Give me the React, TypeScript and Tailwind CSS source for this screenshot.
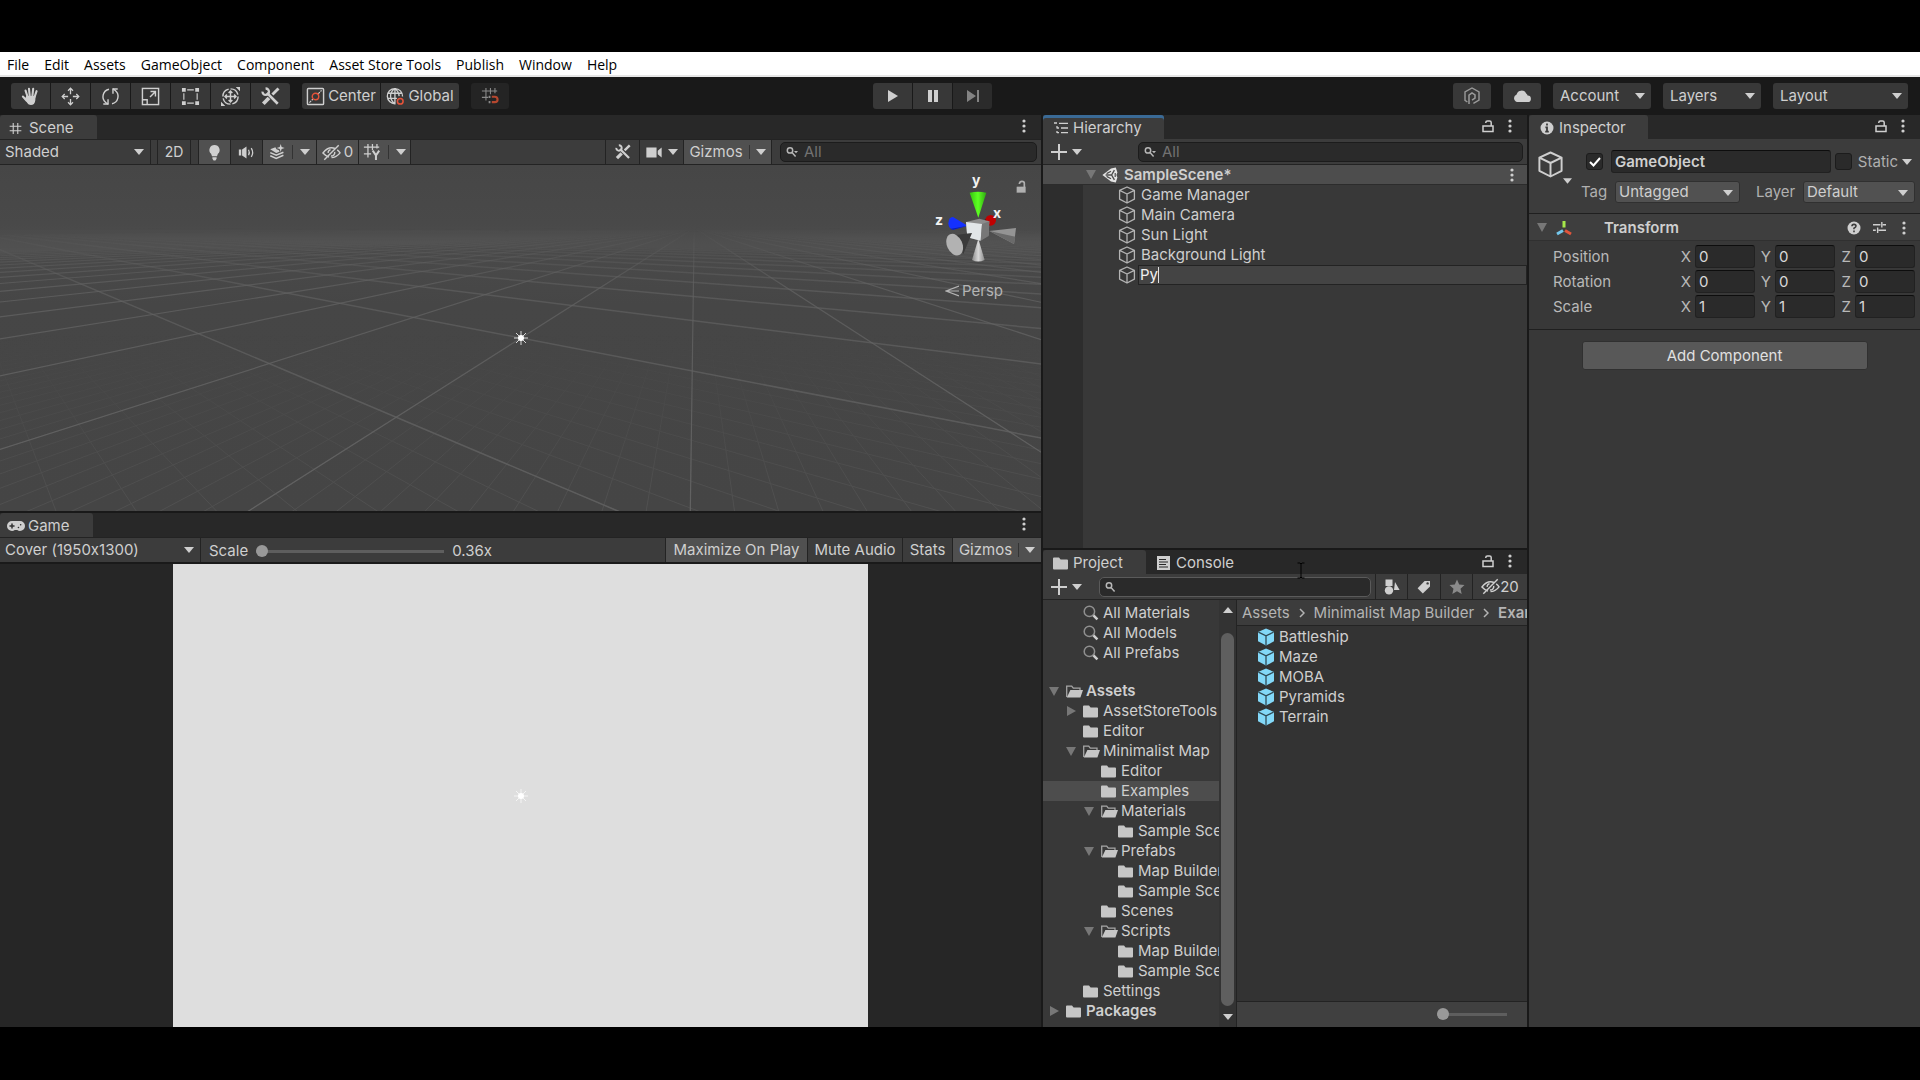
import React, { useState } from 'react';
import clsx from 'clsx';

type IconProps = { className?: string };

function Svg({ className, box = '0 0 20 20', children }: { className?: string; box?: string; children: React.ReactNode }) {
  return (
    <svg viewBox={box} aria-hidden="true" className={clsx('shrink-0', className)} fill="none" stroke="currentColor" strokeWidth="1.5">
      {children}
    </svg>
  );
}

const Caret = ({ className = 'w-[10px] h-[6px]' }: IconProps) => (
  <Svg box="0 0 10 6" className={className}>
    <path d="M0 0h10L5 6z" fill="currentColor" stroke="none" />
  </Svg>
);

const FoldOpen = ({ className }: IconProps) => (
  <Svg box="0 0 10 9" className={clsx('h-[9px] w-[10px] text-[#777]', className)}>
    <path d="M0 0h10L5 9z" fill="currentColor" stroke="none" />
  </Svg>
);

const Dots = ({ className = 'w-1 h-3.5' }: IconProps) => (
  <Svg box="0 0 4 14" className={className}>
    <g fill="currentColor" stroke="none">
      <circle cx="2" cy="2" r="1.6" />
      <circle cx="2" cy="7" r="1.6" />
      <circle cx="2" cy="12" r="1.6" />
    </g>
  </Svg>
);

const LockIcon = ({ className = 'w-[12px] h-[14px]' }: IconProps) => (
  <Svg box="0 0 12 14" className={className}>
    <rect x="1" y="7" width="10" height="5.5" />
    <path d="M9.2 7V3.6Q9.2 2 7.6 2H5.4Q3.8 2 3.8 3.6V4" />
  </Svg>
);

const HandIcon = ({ className }: IconProps) => (
  <Svg className={className}>
    <g strokeLinecap="round" strokeWidth="2.2">
      <path d="M6.8 10L4.8 3.8M9.2 9.5L8.4 1.8M12 9.5L12.8 2M14.3 10.5L16.4 4.4M6 14.4L2 10" />
    </g>
    <path d="M5.6 9.4h9.8l-.4 5.2q-.6 4.4-4.6 4.4-2.6 0-3.8-2.2L4 12.6z" fill="currentColor" stroke="none" />
  </Svg>
);

const MoveIcon = ({ className }: IconProps) => (
  <Svg className={className}>
    <path d="M10 7.5V2M10 12.5v5.5M7.5 10H2M12.5 10h5.5" strokeWidth="1.4" />
    <path d="M7.4 3.9L10 1.3l2.6 2.6M7.4 16.1l2.6 2.6 2.6-2.6M3.9 7.4L1.3 10l2.6 2.6M16.1 7.4l2.6 2.6-2.6 2.6" strokeWidth="1.4" />
  </Svg>
);

const RotateIcon = ({ className }: IconProps) => (
  <Svg className={className}>
    <path d="M8.4 2.3A8 8 0 0 0 5 16.3L7.4 18M11.6 17.7A8 8 0 0 0 15 3.7L12.6 2" />
    <path d="M2.4 17.9h5v-5M17.6 2.1h-5v5" />
  </Svg>
);

const ScaleIcon = ({ className }: IconProps) => (
  <Svg className={className}>
    <rect x="1.5" y="1.5" width="17" height="17" />
    <path d="M1.5 13.5h5v5M9.5 10.5l5.5-5.5M10 4.8h5.2V10" />
  </Svg>
);

const RectIcon = ({ className }: IconProps) => (
  <Svg className={className}>
    <path d="M6.5 3h7M6.5 17h7M3 6.5v7M17 6.5v7" strokeWidth="1.2" />
    <path d="M1 1h4v4H1zM15 1h4v4h-4zM1 15h4v4H1zM15 15h4v4h-4z" fill="currentColor" stroke="none" />
  </Svg>
);

const TransformToolIcon = ({ className }: IconProps) => (
  <Svg className={className}>
    <circle cx="10" cy="10" r="8" strokeDasharray="10.5 2" />
    <path d="M10 4.5v11M4.5 10h11M8 6.2l2-2 2 2M8 13.8l2 2 2-2M6.2 8l-2 2 2 2M13.8 8l2 2-2 2" />
    <path d="M20 0v4.5L15.5 0zM0 20v-4.5L4.5 20z" fill="currentColor" stroke="none" />
  </Svg>
);

const WrenchIcon = ({ className }: IconProps) => (
  <Svg className={className}>
    <path d="M6.2 6.2l11.4 11.4" strokeWidth="2.8" />
    <path d="M4.8 1.6A3.4 3.4 0 1 1 1.6 4.8" strokeWidth="2.4" />
    <path d="M18.4 1.6L12 8" strokeWidth="3" />
    <path d="M8.4 11.6L2.4 17.6" strokeWidth="4" />
  </Svg>
);

const PivotIcon = ({ className }: IconProps) => (
  <Svg className={className}>
    <rect x="1.5" y="1.5" width="17" height="17" rx="1" />
    <path d="M3.6 16.4l3.6-3.6M12.8 7.2l3.6-3.6" strokeWidth="1.2" strokeDasharray="2.5 1" />
    <circle cx="10" cy="10" r="3.4" stroke="#e5533a" />
  </Svg>
);

const GlobeIcon = ({ className }: IconProps) => (
  <Svg className={className}>
    <path d="M17.4 10A8 8 0 1 0 10 17.6M9.4 1.6v16M2 6.6h15M1.5 12h10M9.4 1.6Q4.6 5 4.8 9.8 5 14.4 9.4 17.6M9.4 1.6q4 3 4.4 8" strokeWidth="1.4" />
    <circle cx="15" cy="15" r="3" stroke="#e5533a" strokeWidth="1.6" />
  </Svg>
);

const SnapIcon = ({ className }: IconProps) => (
  <Svg className={className}>
    <path d="M5.5 1v14M10.5 1v7M15.5 1v6M1 4.5h17M1 11.5h7" strokeWidth="1.2" />
    <path d="M12 10.8h3.4a3 3 0 0 1 0 6H12" stroke="#b5472f" strokeWidth="2.4" />
    <path d="M9.5 9.7v2.4M9.5 15.6v2.4" strokeWidth="2" />
  </Svg>
);

const GridIcon = ({ className }: IconProps) => (
  <Svg className={className}>
    <path d="M6.5 1.5v17M13.5 1.5v17M1 6.5h18M1 13.5h18" strokeWidth="1.7" />
  </Svg>
);

const GridAxisIcon = ({ className }: IconProps) => (
  <Svg className={className}>
    <path d="M5.5 1v15M10.5 1v7M15.5 1v5M1 4.5h17M1 12h8" strokeWidth="1.4" />
    <path d="M10.8 8.5l3.6 5.2v5.3M18 8.5l-3.6 5.2" strokeWidth="2.2" />
  </Svg>
);

const BulbIcon = ({ className }: IconProps) => (
  <Svg className={className}>
    <path d="M10 2a5.4 5.4 0 0 1 3.6 9.4L12.6 14H7.4l-1-2.6A5.4 5.4 0 0 1 10 2zM7.8 15h4.4v1.6L11 18.4H9l-1.2-1.8z" fill="currentColor" stroke="none" />
  </Svg>
);

const AudioIcon = ({ className }: IconProps) => (
  <Svg className={className}>
    <path d="M1 6.4h2.8v7.2H1zM4.8 6.4L10 3v14l-5.2-3.4z" fill="currentColor" stroke="none" />
    <path d="M12.4 6.8q1.8 3.2 0 6.4M15.6 4.8q3.2 5.2 0 10.4" />
  </Svg>
);

const LayersIcon = ({ className }: IconProps) => (
  <Svg className={className}>
    <path d="M1.5 6.6L8 4l1.4 2.6 3 1.2.8 2L9 11.2zM14.6 0l1.2 3.8L19.6 5l-3.8 1.2L14.6 10l-1.2-3.8L9.6 5l3.8-1.2z" fill="currentColor" stroke="none" />
    <path d="M1.6 10.8L9 14l9-3.6M1.6 14.8L9 18l9-3.8" strokeWidth="2" />
  </Svg>
);

const HiddenIcon = ({ className }: IconProps) => (
  <Svg className={className}>
    <path d="M7.4 14.8Q4 13.8 1 10.5 5.4 5 10 5q2 0 3.6.8M16 7.2q1.8 1.2 3 3.2-4 5-9 5" />
    <path d="M2.4 17.6L17.6 2.4M6.4 10.4A3.6 3.6 0 0 1 9 7M13.4 9.4a3.6 3.6 0 0 1-4 4.2" />
  </Svg>
);

const CameraIcon = ({ className }: IconProps) => (
  <Svg className={className}>
    <path d="M1 4h12v12H1zM14.4 8L19 4v12l-4.6-4z" fill="currentColor" stroke="none" />
  </Svg>
);

const SearchIcon = ({ className, menu = false }: IconProps & { menu?: boolean }) => (
  <Svg className={className} box="0 0 12 12">
    <circle cx="4" cy="4.4" r="2.7" />
    <path d="M6 6.6L9.6 10.4" />
    {menu && <path d="M8 5h4l-2 2.2z" fill="currentColor" stroke="none" />}
  </Svg>
);

const LensIcon = ({ className }: IconProps) => (
  <Svg className={className} box="0 0 16 16">
    <circle cx="6.4" cy="6.4" r="5.2" stroke="#8f8f8f" />
    <path d="M10.4 10.4l4 4" strokeWidth="2.6" />
  </Svg>
);

const TreeIcon = ({ className }: IconProps) => (
  <Svg className={className} box="0 0 14 12">
    <path d="M0 1h3M5 1.4h9M7 6h7M7 10.6h7M3 4v2.6M3 6h2M3 9v2M3 10.6h2" strokeWidth="1.3" />
  </Svg>
);

const CubeIcon = ({ className }: IconProps) => (
  <Svg className={className} box="0 0 18 18">
    <path d="M9 1l7.4 3.4v8.8L9 17l-7.4-3.8V4.4zM1.6 4.4L9 8l7.4-3.6M9 8v9" strokeWidth="1.3" strokeLinejoin="round" />
  </Svg>
);

const PrefabIcon = ({ className }: IconProps) => (
  <Svg className={className} box="0 0 18 18">
    <path d="M9 .5l8 3.4v9.4L9 17.6l-8-4.3V3.9z" fill="#83d8f8" stroke="none" />
    <path d="M1.4 4.2L9 7.8l7.6-3.6M9 7.8v9.4" stroke="#2f4a56" strokeWidth="1.3" />
  </Svg>
);

const UnityIcon = ({ className }: IconProps) => (
  <Svg className={className} box="0 0 16 16">
    <path d="M.4 8L9 1.4l4.8-.8 1.6 5L14.4 8l1 2.4-1.6 5-4.8-.8z" fill="#e4e4e4" stroke="none" />
    <path d="M3.6 8h6M9.6 8l2.8-4.8M9.6 8l2.8 4.8" stroke="#4d4d4d" strokeWidth="1.4" />
    <path d="M4.6 6.6L9 4.2M4.6 9.4L9 11.8M13.2 6v4" stroke="#4d4d4d" strokeWidth="1.2" />
  </Svg>
);

const FolderIcon = ({ className = 'w-[15px] h-[13px]' }: IconProps) => (
  <Svg className={className} box="0 0 15 13">
    <path d="M0 1.4Q0 .5 1 .5h5l1.6 2H14q1 0 1 1V11.5q0 1-1 1H1q-1 0-1-1z" fill="#c6c6c6" stroke="none" />
  </Svg>
);

const FolderOpenIcon = ({ className = 'w-[17px] h-[13px]' }: IconProps) => (
  <Svg className={className} box="0 0 17 13">
    <path d="M.7 12V1.2h5l1.6 2H14V5" stroke="#a5a5a5" strokeWidth="1.3" />
    <path d="M4.4 5H17l-2.6 7.5H.8z" fill="#c6c6c6" stroke="none" />
  </Svg>
);

const ConsoleIcon = ({ className }: IconProps) => (
  <Svg className={className} box="0 0 13 14">
    <path d="M0 0h13v14H0z" fill="currentColor" stroke="none" />
    <path d="M2 3.5h7M2 6h9M2 8.5h7M2 11h9" stroke="#282828" strokeWidth="1.2" />
  </Svg>
);

const GamepadIcon = ({ className }: IconProps) => (
  <Svg className={className} box="0 0 18 10">
    <path d="M5 0h8a5 5 0 0 1 0 10q-1.6 0-2.8-1H7.8Q6.6 10 5 10A5 5 0 0 1 5 0z" fill="currentColor" stroke="none" />
    <path d="M5 3v4M3 5h4M11.4 6.6h.1M13.6 3.8h.1" stroke="#333" strokeWidth="1.5" strokeLinecap="round" />
  </Svg>
);

const InfoIcon = ({ className }: IconProps) => (
  <Svg className={className} box="0 0 14 14">
    <circle cx="7" cy="7" r="6.5" fill="currentColor" stroke="none" />
    <path d="M7 2.6v2M5.4 6.4H7v4M5.2 10.6h3.6" stroke="#3c3c3c" strokeWidth="1.8" />
  </Svg>
);

const HelpIcon = ({ className }: IconProps) => (
  <Svg className={className} box="0 0 14 14">
    <circle cx="7" cy="7" r="6.5" fill="currentColor" stroke="none" />
    <path d="M5 5.2Q5 3.4 7 3.4t2 1.7Q9 6.2 7 7.2v1M7 9.6v1.6" stroke="#3c3c3c" strokeWidth="1.6" />
  </Svg>
);

const PresetIcon = ({ className }: IconProps) => (
  <Svg className={className} box="0 0 14 14">
    <path d="M0 4h8M10.5 4H14M9.5 1v6M0 10h3M6 10h8M5 7v6" />
  </Svg>
);

const AxesIcon = ({ className }: IconProps) => (
  <Svg className={className} box="0 0 16 16">
    <g strokeWidth="3">
      <path d="M8 1v6.5" stroke="#a6e84a" />
      <path d="M7 10.5L1 14" stroke="#74c7ec" />
      <path d="M9 10.5L15 14" stroke="#e0553c" />
    </g>
  </Svg>
);

const CollabIcon = ({ className }: IconProps) => (
  <Svg className={className} box="0 0 16 18">
    <path d="M3.4 15L1 13.4V4.8L8 1l7 3.8v8.4L9.4 16.4" strokeWidth="1.4" />
    <path d="M5 17V8.200L8 6l3 2v3.200l-3 2" strokeWidth="1.500" />
  </Svg>
);

const CloudIcon = ({ className }: IconProps) => (
  <Svg className={className} box="0 0 18 12">
    <path d="M4 12a4 4 0 0 1-.4-7.6A5.2 5.2 0 0 1 13.2 3.4a3 3 0 0 1 1.4 2.2A3.2 3.2 0 0 1 14.8 12z" fill="currentColor" stroke="none" />
  </Svg>
);

const ShapesIcon = ({ className }: IconProps) => (
  <Svg className={className} box="0 0 16 16">
    <path d="M1.5.5h7v6.5h-7zM11 3l4.6 8H10z" fill="currentColor" stroke="none" />
    <circle cx="5" cy="11.4" r="4.2" fill="currentColor" stroke="none" />
  </Svg>
);

const TagIcon = ({ className }: IconProps) => (
  <Svg className={className} box="0 0 14 14">
    <path d="M7.6 1H13v5.4L5.8 13.4.6 8.2z" fill="currentColor" stroke="none" />
    <circle cx="10.6" cy="3.4" r="1.2" fill="#3c3c3c" stroke="none" />
  </Svg>
);

const StarIcon = ({ className }: IconProps) => (
  <Svg className={className} box="0 0 16 16">
    <path d="M8 .6l2.2 5 5.3.5-4 3.6 1.2 5.4L8 12.3l-4.7 2.8 1.2-5.4-4-3.6 5.3-.5z" fill="#8a8a8a" stroke="none" />
  </Svg>
);

const menuItems = ['File', 'Edit', 'Assets', 'GameObject', 'Component', 'Asset Store Tools', 'Publish', 'Window', 'Help'];

function MenuBar() {
  return (
    <nav className="flex h-[25px] shrink-0 items-start gap-[15px] border-b-2 border-[#e6e6e6] bg-white px-[7px] pt-px font-['Open_Sans','Liberation_Sans',sans-serif] text-[14px] leading-6 text-black">
      {menuItems.map((item) => (
        <button key={item} type="button" className="whitespace-nowrap">
          {item}
        </button>
      ))}
    </nav>
  );
}

function ToolbarSelect({ label, className }: { label: string; className: string }) {
  return (
    <div className={clsx('relative h-[26px] rounded-[3px] bg-[#383838]', className)}>
      <select aria-label={label} className="h-full w-full appearance-none bg-transparent px-[7px] outline-none">
        <option>{label}</option>
      </select>
      <Caret className="pointer-events-none absolute right-[6px] top-[10px] h-[6px] w-[10px]" />
    </div>
  );
}

const tools = [
  { name: 'Hand', Icon: HandIcon },
  { name: 'Move', Icon: MoveIcon },
  { name: 'Rotate', Icon: RotateIcon },
  { name: 'Scale', Icon: ScaleIcon },
  { name: 'Rect', Icon: RectIcon },
  { name: 'Transform', Icon: TransformToolIcon },
  { name: 'Custom', Icon: WrenchIcon },
];

const toolButton = 'flex h-[26px] items-center justify-center bg-[#383838]';

function MainToolbar() {
  return (
    <div className="grid h-[38px] shrink-0 grid-cols-[873fr_119px_928fr] items-center bg-[#191919]">
      <div className="flex gap-3 pl-[11px]">
        <div className="flex gap-px overflow-hidden rounded-[3px]">
          {tools.map(({ name, Icon }) => (
            <button key={name} type="button" aria-label={name} className={clsx(toolButton, 'w-[39px]')}>
              <Icon className="size-[19px]" />
            </button>
          ))}
        </div>
        <div className="flex gap-px overflow-hidden rounded-[3px]">
          <button type="button" className={clsx(toolButton, 'w-[78px] gap-[3px]')}>
            <PivotIcon className="size-[19px]" />
            Center
          </button>
          <button type="button" className={clsx(toolButton, 'w-[78px] gap-[3px]')}>
            <GlobeIcon className="size-[19px]" />
            Global
          </button>
        </div>
        <button type="button" aria-label="Snap" className="flex h-[26px] w-[38px] items-center justify-center rounded-[3px] bg-[#242424] text-[#8a8a8a]">
          <SnapIcon className="size-[18px]" />
        </button>
      </div>
      <div className="flex gap-px overflow-hidden rounded-[3px]">
        <button type="button" aria-label="Play" className={clsx(toolButton, 'flex-1')}>
          <Svg box="0 0 10 12" className="h-3 w-[10px]">
            <path d="M0 0l10 6-10 6z" fill="currentColor" stroke="none" />
          </Svg>
        </button>
        <button type="button" aria-label="Pause" className={clsx(toolButton, 'flex-1')}>
          <Svg box="0 0 10 12" className="h-3 w-[10px]">
            <path d="M0 0h4v12H0zM6 0h4v12H6z" fill="currentColor" stroke="none" />
          </Svg>
        </button>
        <button type="button" aria-label="Step" className="flex h-[26px] flex-1 items-center justify-center bg-[#2b2b2b] text-[#838383]">
          <Svg box="0 0 12 12" className="size-3">
            <path d="M0 0l9 6-9 6zM10 0h2v12h-2z" fill="currentColor" stroke="none" />
          </Svg>
        </button>
      </div>
      <div className="flex justify-end gap-3 pr-3">
        <button type="button" aria-label="Collaborate" className={clsx(toolButton, 'w-[38px] rounded-[3px] text-[#9a9a9a]')}>
          <CollabIcon className="h-[18px] w-4" />
        </button>
        <button type="button" aria-label="Cloud" className={clsx(toolButton, 'w-[38px] rounded-[3px]')}>
          <CloudIcon className="h-3 w-[18px]" />
        </button>
        <ToolbarSelect label="Account" className="w-[98px]" />
        <ToolbarSelect label="Layers" className="w-[98px]" />
        <ToolbarSelect label="Layout" className="w-[135px]" />
      </div>
    </div>
  );
}

function TabBar({ children, lock = false }: { children: React.ReactNode; lock?: boolean }) {
  return (
    <div className="flex h-6 shrink-0 items-stretch bg-[#282828]">
      {children}
      <div className="ml-auto flex items-center gap-[14px] pr-[15px] pb-[2px]">
        {lock && (
          <button type="button" aria-label="Lock">
            <LockIcon />
          </button>
        )}
        <button type="button" aria-label="More">
          <Dots />
        </button>
      </div>
    </div>
  );
}

function Tab({ className, active = true, children }: { className?: string; active?: boolean; children: React.ReactNode }) {
  return (
    <button type="button" className={clsx('flex items-center rounded-t-[3px] pt-[2px] whitespace-nowrap', active && 'bg-[#3c3c3c]', className)}>
      {children}
    </button>
  );
}

const barItem = 'flex items-center justify-center border-r border-[#232323] whitespace-nowrap';

function SearchField({ className, placeholder, menu = false, label }: { className?: string; placeholder?: string; menu?: boolean; label: string }) {
  return (
    <label
      className={clsx(
        'flex h-5 min-w-0 items-center rounded-[5px] border bg-[#2a2a2a] px-[5px] text-[#b8b8b8]',
        menu ? 'gap-[6px] border-[#1c1c1c]' : 'border-[#5a5a5a]',
        className,
      )}
    >
      <SearchIcon menu={menu} className="size-3" />
      <input aria-label={label} placeholder={placeholder} className="w-full min-w-0 bg-transparent outline-none placeholder:text-[#727272]" />
    </label>
  );
}

// Ground grid, projected with a camera orbiting the origin
const FOCAL = 295;
const PITCH = 0.357;
const YAW = 0.503;
const CELL = 0.51;

function projectLine(alongX: boolean, offset: number) {
  const sin = Math.sin(YAW);
  const cos = Math.cos(YAW);
  const [dr, dg] = alongX ? [-cos, sin] : [sin, cos];
  const [or, og] = alongX ? [sin * offset, cos * offset] : [-cos * offset, sin * offset];
  // start the line at the near plane
  const near = (0.02 - 1 - og * Math.cos(PITCH)) / (dg * Math.cos(PITCH));
  const point = (t: number) => {
    const r = or + dr * t;
    const g = og + dg * t;
    const depth = 1 + g * Math.cos(PITCH);
    return `${(521 + (FOCAL * r) / depth).toFixed(1)} ${(173 - (FOCAL * g * Math.sin(PITCH)) / depth).toFixed(1)}`;
  };
  return `M${point(near)}L${point(near + 400)}`;
}

function gridPath(alongX: boolean, step: number, count: number) {
  let d = '';
  for (let i = -count; i <= count; i++) {
    d += projectLine(alongX, i * step);
  }
  return d;
}

const majorX = gridPath(true, CELL, 60);
const majorZ = gridPath(false, CELL, 60);
const minorGrid = gridPath(true, CELL / 10, 60) + gridPath(false, CELL / 10, 60);

function SceneGrid() {
  return (
    <svg viewBox="0 0 1041 346" preserveAspectRatio="xMidYMid slice" className="absolute inset-0 h-full w-full" fill="none">
      <defs>
        <linearGradient id="sky" x1="0" y1="0" x2="0" y2="1">
          <stop offset="0" stopColor="#464646" />
          <stop offset=".17" stopColor="#494949" />
          <stop offset=".2" stopColor="#4b4b4b" />
          <stop offset=".4" stopColor="#464646" />
          <stop offset="1" stopColor="#454545" />
        </linearGradient>
        <linearGradient id="far" x1="0" y1="62" x2="0" y2="346" gradientUnits="userSpaceOnUse">
          <stop offset="0" stopColor="#fff" stopOpacity="0" />
          <stop offset=".06" stopColor="#fff" stopOpacity=".25" />
          <stop offset=".22" stopColor="#fff" stopOpacity=".75" />
          <stop offset="1" stopColor="#fff" />
        </linearGradient>
        <linearGradient id="near" x1="0" y1="170" x2="0" y2="346" gradientUnits="userSpaceOnUse">
          <stop offset="0" stopColor="#fff" stopOpacity="0" />
          <stop offset="1" stopColor="#fff" stopOpacity=".7" />
        </linearGradient>
        <mask id="farMask" maskUnits="userSpaceOnUse" x="0" y="0" width="1041" height="346">
          <rect width="1041" height="346" fill="url(#far)" />
        </mask>
        <mask id="nearMask" maskUnits="userSpaceOnUse" x="0" y="0" width="1041" height="346">
          <rect width="1041" height="346" fill="url(#near)" />
        </mask>
      </defs>
      <rect width="1041" height="346" fill="url(#sky)" />
      <path d={minorGrid} stroke="#565656" mask="url(#nearMask)" />
      <path d={majorX} stroke="#5e5e5e" strokeWidth="1.5" mask="url(#farMask)" />
      <path d={majorZ} stroke="#626262" strokeWidth="1.2" mask="url(#farMask)" />
    </svg>
  );
}

const Sparkle = ({ className }: IconProps) => (
  <Svg className={className} box="0 0 16 16">
    <path d="M8 1v14M1 8h14M3 3l10 10M13 3L3 13" strokeWidth="1" />
    <circle cx="8" cy="8" r="3" fill="#fff" stroke="none" />
  </Svg>
);

function OrientationGizmo() {
  return (
    <svg viewBox="0 0 141 116" className="absolute right-0 top-0 h-[116px] w-[141px]" fontSize="14" fontWeight="700" fill="#f2f2f2">
      <defs>
        <linearGradient id="cone" x1="0" x2="1">
          <stop offset="0" stopColor="#8a8a8a" />
          <stop offset=".5" stopColor="#d8d8d8" />
          <stop offset="1" stopColor="#8a8a8a" />
        </linearGradient>
        <linearGradient id="green" x1="0" x2="1">
          <stop offset="0" stopColor="#35c40f" />
          <stop offset=".5" stopColor="#5dff22" />
          <stop offset="1" stopColor="#2fa811" />
        </linearGradient>
      </defs>
      <g transform="scale(.3333) translate(0 -15)">
        <path d="M268 213L348 204 342 252z" fill="#949494" />
        <path d="M268 213L346 230 342 252z" fill="#6a6a6a" />
        <circle cx="272" cy="181" r="16" fill="#c00000" />
        <path d="M256 176l14 20-16 2z" fill="#6e0000" />
        <path d="M209 98q25-6 50 0L235 173z" fill="url(#green)" />
        <path d="M145 190q2-20 14-19L203 197 160 209q-14-2-15-19z" fill="#1430ff" />
        <path d="M150 207L203 197 160 209z" fill="#0c1da8" />
        <path d="M235 236L216 300q18 9 38 0z" fill="url(#cone)" />
        <path d="M198 186L238 176 268 184 266 226 240 242 202 232z" fill="#8c8c8c" />
        <path d="M198 186L246 192 242 242 202 232z" fill="#e2e6e8" />
        <path d="M246 192L268 184 266 228 242 242z" fill="#777" />
        <path d="M160 226L216 219 190 282z" fill="#3a3a3a" />
        <ellipse cx="164" cy="254" rx="23" ry="34" fill="#b2b2b2" transform="rotate(-24 164 254)" />
        <path d="M350 80h27v18h-27z" fill="#b0b0b0" />
        <path d="M358 72q1-8 8-8t7 6v12" fill="none" stroke="#b0b0b0" strokeWidth="5" />
      </g>
      <text x="72" y="20">y</text>
      <text x="93" y="53">x</text>
      <text x="35" y="60">z</text>
    </svg>
  );
}

function SceneToolbar() {
  return (
    <div className="flex h-[26px] shrink-0 items-stretch border-y border-[#232323] bg-[#3c3c3c]">
      <div className="relative w-[151px] border-r border-[#232323]">
        <select aria-label="Draw mode" className="h-full w-full appearance-none bg-transparent px-[5px] outline-none">
          <option>Shaded</option>
        </select>
        <Caret className="pointer-events-none absolute right-[6px] top-[9px] h-[6px] w-[10px]" />
      </div>
      <button type="button" className={clsx(barItem, 'ml-[6px] w-[34px] border-l text-[14px]')}>2D</button>
      <div className="ml-[7px] flex border-l border-[#232323]">
        <button type="button" aria-label="Lighting" className={clsx(barItem, 'w-8 bg-[#505050]')}>
          <BulbIcon className="size-[19px]" />
        </button>
        <button type="button" aria-label="Audio" className={clsx(barItem, 'w-8')}>
          <AudioIcon className="size-[17px]" />
        </button>
        <button type="button" aria-label="Effects" className={clsx(barItem, 'w-[54px] gap-[7px] bg-[#505050]')}>
          <LayersIcon className="size-[16px]" />
          <span className="h-[14px] w-px bg-[#333]" />
          <Caret />
        </button>
        <button type="button" aria-label="Hidden objects" className={clsx(barItem, 'w-[42px] gap-[3px] bg-[#505050]')}>
          <HiddenIcon className="size-[19px]" />0
        </button>
        <button type="button" aria-label="Grid" className={clsx(barItem, 'w-[52px] gap-[7px] bg-[#505050]')}>
          <GridAxisIcon className="size-[18px]" />
          <span className="h-[14px] w-px bg-[#333]" />
          <Caret />
        </button>
      </div>
      <div className="ml-auto flex border-l border-[#232323]">
        <button type="button" aria-label="Tools" className={clsx(barItem, 'w-[34px]')}>
          <WrenchIcon className="size-4" />
        </button>
        <button type="button" aria-label="Camera" className={clsx(barItem, 'w-[44px] gap-[5px]')}>
          <CameraIcon className="h-[17px] w-[18px]" />
          <Caret />
        </button>
        <button type="button" className={clsx(barItem, 'w-[88px] gap-[6px] bg-[#505050]')}>
          Gizmos
          <span className="h-[14px] w-px bg-[#333]" />
          <Caret />
        </button>
      </div>
      <SearchField menu placeholder="All" label="Search scene" className="ml-2 mr-1 mt-[2px] w-[257px]" />
    </div>
  );
}

function ScenePanel() {
  return (
    <section className="flex min-h-0 min-w-0 flex-col">
      <TabBar>
        <Tab className="w-[97px] gap-[7px] pl-[9px]">
          <GridIcon className="size-[13px]" />
          Scene
        </Tab>
      </TabBar>
      <SceneToolbar />
      <div className="relative flex min-h-0 flex-1 items-center justify-center overflow-hidden">
        <SceneGrid />
        <Sparkle className="relative size-4 text-[#d8d8d8]" />
        <OrientationGizmo />
        <button type="button" className="absolute right-[38px] top-[116px] flex items-center gap-[3px] text-[#b4b4b4]">
          <Svg box="0 0 14 12" className="h-3 w-[14px]">
            <path d="M14 1L1 6l13 5M1 6h13" strokeWidth="1.2" />
          </Svg>
          Persp
        </button>
      </div>
    </section>
  );
}

function GamePanel() {
  const [scale, setScale] = useState(0);
  return (
    <section className="flex min-h-0 min-w-0 flex-col">
      <TabBar>
        <Tab className="w-[93px] gap-[3px] pl-[7px]">
          <GamepadIcon className="h-[10px] w-[18px]" />
          Game
        </Tab>
      </TabBar>
      <div className="flex h-[27px] shrink-0 items-stretch border-t border-b-2 border-t-[#232323] border-b-[#1a1a1a] bg-[#3c3c3c]">
        <div className="relative w-[201px] border-r border-[#232323]">
          <select aria-label="Aspect" className="h-full w-full appearance-none bg-transparent px-[5px] outline-none">
            <option>Cover (1950x1300)</option>
          </select>
          <Caret className="pointer-events-none absolute right-[6px] top-[9px] h-[6px] w-[10px]" />
        </div>
        <label className="flex items-center gap-2 pl-2 pt-[2px]">
          Scale
          <input
            type="range"
            min={0}
            max={100}
            value={scale}
            onChange={(e) => setScale(Number(e.target.value))}
            className="h-3 w-[188px] appearance-none bg-transparent [&::-webkit-slider-runnable-track]:h-[3px] [&::-webkit-slider-runnable-track]:bg-[#5e5e5e] [&::-webkit-slider-thumb]:-mt-[5px] [&::-webkit-slider-thumb]:size-3 [&::-webkit-slider-thumb]:appearance-none [&::-webkit-slider-thumb]:rounded-full [&::-webkit-slider-thumb]:bg-[#999]"
          />
          <span>0.36x</span>
        </label>
        <div className="ml-auto flex border-l border-[#232323]">
          <button type="button" className={clsx(barItem, 'w-[142px] bg-[#505050]')}>Maximize On Play</button>
          <button type="button" className={clsx(barItem, 'w-[95px]')}>Mute Audio</button>
          <button type="button" className={clsx(barItem, 'w-[50px]')}>Stats</button>
          <button type="button" className="flex w-[88px] items-center justify-center gap-[6px] bg-[#505050]">
            Gizmos
            <span className="h-[14px] w-px bg-[#333]" />
            <Caret />
          </button>
        </div>
      </div>
      <div className="flex min-h-0 flex-1 justify-center bg-[#262626]">
        <div className="flex aspect-[3/2] h-full items-center justify-center bg-[#dedede]">
          <Sparkle className="size-4 text-[#f4f4f4]" />
        </div>
      </div>
    </section>
  );
}

const sceneObjects = ['Game Manager', 'Main Camera', 'Sun Light', 'Background Light'];

function HierarchyPanel() {
  const [name, setName] = useState('Py');
  return (
    <section className="flex min-h-0 min-w-0 flex-col bg-[#383838]">
      <TabBar lock>
        <Tab className="w-[121px] gap-[5px] pl-[11px] shadow-[inset_0_3px_#3a6a96]">
          <TreeIcon className="h-3 w-[14px]" />
          Hierarchy
        </Tab>
      </TabBar>
      <div className="flex h-[26px] shrink-0 items-center border-b border-[#232323] bg-[#3c3c3c] pl-2 pr-1">
        <AddButton />
        <SearchField menu placeholder="All" label="Search hierarchy" className="ml-[56px] flex-1" />
      </div>
      <div className="flex h-5 shrink-0 items-center border-b border-[#2c2c2c] bg-[#4d4d4d] pl-[43px] pr-[13px] font-semibold">
        <FoldOpen />
        <UnityIcon className="ml-[6px] size-4" />
        <span className="ml-[6px]">SampleScene*</span>
        <Dots className="ml-auto h-3.5 w-1" />
      </div>
      <div className="flex min-h-0 flex-1">
        <div className="w-10 shrink-0 bg-[#2d2d2d]" />
        <ul className="flex-1">
          {sceneObjects.map((item) => (
            <li key={item} className="flex h-5 items-center gap-[5px] pl-[35px]">
              <CubeIcon className="size-[18px] text-[#b4b4b4]" />
              {item}
            </li>
          ))}
          <li className="flex h-5 items-center gap-[2px] pl-[35px]">
            <CubeIcon className="size-[18px] text-[#b4b4b4]" />
            <span className="flex h-5 flex-1 items-center border border-[#232323] bg-[#444] pl-px text-[#f0f0f0]">
              <input
                aria-label="Object name"
                value={name}
                onChange={(e) => setName(e.target.value)}
                className="field-sizing-content bg-transparent outline-none"
              />
              <span className="h-4 w-px bg-[#e0e0e0]" />
            </span>
          </li>
        </ul>
      </div>
    </section>
  );
}

function AddButton() {
  return (
    <button type="button" aria-label="Create" className="flex items-center gap-[5px]">
      <Svg box="0 0 16 16" className="size-4">
        <path d="M8 0v16M0 8h16" strokeWidth="2" />
      </Svg>
      <Caret />
    </button>
  );
}

type TreeNode = { label: string; depth: number; state?: 'open' | 'closed'; bold?: boolean; selected?: boolean };

const tree: TreeNode[] = [
  { label: 'Assets', depth: 0, state: 'open', bold: true },
  { label: 'AssetStoreTools', depth: 1, state: 'closed' },
  { label: 'Editor', depth: 1 },
  { label: 'Minimalist Map', depth: 1, state: 'open' },
  { label: 'Editor', depth: 2 },
  { label: 'Examples', depth: 2, selected: true },
  { label: 'Materials', depth: 2, state: 'open' },
  { label: 'Sample Scene', depth: 3 },
  { label: 'Prefabs', depth: 2, state: 'open' },
  { label: 'Map Builder', depth: 3 },
  { label: 'Sample Scene', depth: 3 },
  { label: 'Scenes', depth: 2 },
  { label: 'Scripts', depth: 2, state: 'open' },
  { label: 'Map Builder', depth: 3 },
  { label: 'Sample Scene', depth: 3 },
  { label: 'Settings', depth: 1 },
  { label: 'Packages', depth: 0, state: 'closed', bold: true },
];

const indent = ['pl-[6px]', 'pl-[23px]', 'pl-[41px]', 'pl-[58px]'];

function TreeRow({ label, depth, state, bold, selected }: TreeNode) {
  return (
    <li className={clsx('flex h-5 items-center whitespace-nowrap', indent[depth], bold && 'font-semibold', selected && 'bg-[#4d4d4d]')}>
      <span className="flex w-[17px] shrink-0 text-[#777]">
        {state === 'open' && <FoldOpen />}
        {state === 'closed' && (
          <Svg box="0 0 9 10" className="ml-px h-[10px] w-[9px]">
            <path d="M0 0l9 5-9 5z" fill="currentColor" stroke="none" />
          </Svg>
        )}
      </span>
      <span className="flex w-5 shrink-0">{state === 'open' ? <FolderOpenIcon /> : <FolderIcon />}</span>
      {label}
    </li>
  );
}

const favorites = ['All Materials', 'All Models', 'All Prefabs'];
const prefabs = ['Battleship', 'Maze', 'MOBA', 'Pyramids', 'Terrain'];

function ProjectPanel() {
  const [size, setSize] = useState(0);
  return (
    <section className="relative flex min-h-0 min-w-0 flex-col bg-[#383838]">
      <TabBar lock>
        <Tab className="w-[103px] gap-[5px] pl-[10px]">
          <FolderIcon />
          Project
        </Tab>
        <Tab active={false} className="gap-[6px] pl-[11px]">
          <ConsoleIcon className="h-[14px] w-[13px]" />
          Console
        </Tab>
      </TabBar>
      <div className="flex h-[26px] shrink-0 items-center border-b border-[#232323] bg-[#3c3c3c] pl-2">
        <AddButton />
        <SearchField label="Search project" className="ml-[17px] flex-1" />
        <div className="ml-1 flex h-full border-l border-[#232323]">
          <button type="button" aria-label="Search by type" className={clsx(barItem, 'w-8')}>
            <ShapesIcon className="size-4" />
          </button>
          <button type="button" aria-label="Search by label" className={clsx(barItem, 'w-[33px]')}>
            <TagIcon className="size-[14px]" />
          </button>
          <button type="button" aria-label="Save search" className={clsx(barItem, 'w-8')}>
            <StarIcon className="size-4" />
          </button>
          <button type="button" className="flex w-[54px] items-center justify-center">
            <HiddenIcon className="size-[19px]" />20
          </button>
        </div>
      </div>
      <div className="flex min-h-0 flex-1">
        <div className="w-[176px] shrink-0 overflow-hidden pt-[3px]">
          <ul>
            {favorites.map((item) => (
              <li key={item} className="flex h-5 items-center gap-1 pl-10 whitespace-nowrap">
                <LensIcon className="size-4" />
                {item}
              </li>
            ))}
          </ul>
          <ul className="mt-[18px]">
            {tree.map((node, i) => (
              <TreeRow key={i} {...node} />
            ))}
          </ul>
        </div>
        <div className="flex w-[18px] shrink-0 flex-col items-center gap-5 border-r border-[#232323] bg-[#333] py-[7px]">
          <Caret className="h-[6px] w-[10px] rotate-180" />
          <div className="mb-[-12px] w-[13px] flex-1 rounded-full bg-[#5f5f5f]" />
          <Caret />
        </div>
        <div className="flex min-w-0 flex-1 flex-col bg-[#333]">
          <div className="flex h-[26px] shrink-0 items-center gap-[9px] overflow-hidden border-b border-[#232323] bg-[#3c3c3c] pl-[5px] whitespace-nowrap text-[#b4b4b4]">
            <a href="#assets">Assets</a>
            <Chevron />
            <a href="#builder">Minimalist Map Builder</a>
            <Chevron />
            <a href="#examples" className="font-semibold">Examples</a>
          </div>
          <ul className="flex-1 pt-px">
            {prefabs.map((item) => (
              <li key={item} className="flex h-5 items-center gap-[4px] pl-5">
                <PrefabIcon className="size-[18px]" />
                {item}
              </li>
            ))}
          </ul>
          <div className="flex h-[26px] shrink-0 items-center justify-end border-t border-[#232323] bg-[#404040] pr-5">
            <input
              type="range"
              aria-label="Icon size"
              min={0}
              max={100}
              value={size}
              onChange={(e) => setSize(Number(e.target.value))}
              className="h-3 w-[70px] appearance-none bg-transparent [&::-webkit-slider-runnable-track]:h-[3px] [&::-webkit-slider-runnable-track]:bg-[#5e5e5e] [&::-webkit-slider-thumb]:-mt-[5px] [&::-webkit-slider-thumb]:size-3 [&::-webkit-slider-thumb]:appearance-none [&::-webkit-slider-thumb]:rounded-full [&::-webkit-slider-thumb]:bg-[#999]"
            />
          </div>
        </div>
      </div>
      {/* text cursor */}
      <svg viewBox="0 0 8 17" className="absolute left-[254px] top-[12px] h-[17px] w-2" fill="none" stroke="#000">
        <path d="M.5 1h2.5l1 1 1-1h2.5M.5 16h2.5l1-1 1 1h2.5M4 2v13" />
      </svg>
    </section>
  );
}

function Chevron() {
  return (
    <Svg box="0 0 6 10" className="h-[10px] w-[6px]">
      <path d="M1 1l4 4-4 4" />
    </Svg>
  );
}

function InspectorSelect({ id, value, className }: { id: string; value: string; className: string }) {
  return (
    <div className={clsx('relative h-[22px] rounded-[3px] border border-[#303030] bg-[#515151]', className)}>
      <select id={id} className="h-full w-full appearance-none bg-transparent px-[3px] leading-5 outline-none">
        <option>{value}</option>
      </select>
      <Caret className="pointer-events-none absolute right-[6px] top-[8px] h-[6px] w-[10px]" />
    </div>
  );
}

const transformRows = [
  { label: 'Position', value: '0' },
  { label: 'Rotation', value: '0' },
  { label: 'Scale', value: '1' },
];

const field = 'min-w-0 rounded-[3px] border border-[#212121] border-t-[#0d0d0d] bg-[#2a2a2a] outline-none';

function InspectorPanel() {
  return (
    <section className="flex min-h-0 min-w-0 flex-col bg-[#383838]">
      <TabBar lock>
        <Tab className="w-[119px] gap-[5px] pl-[11px]">
          <InfoIcon className="size-[14px]" />
          Inspector
        </Tab>
      </TabBar>
      <div className="flex h-[75px] shrink-0 border-b border-[#1f1f1f] bg-[#3c3c3c] pl-[8px] pr-[5px] pt-[11px]">
        <div className="flex w-[44px] shrink-0">
          <CubeIcon className="mt-px size-[27px]" />
          <Caret className="mt-[28px] -ml-px h-[6px] w-[9px]" />
        </div>
        <div className="flex min-w-0 flex-1 flex-col gap-[8px]">
          <div className="flex h-[23px] items-center pl-[5px]">
            <input
              type="checkbox"
              aria-label="Active"
              defaultChecked
              className="peer size-[17px] shrink-0 appearance-none rounded-[3px] border border-[#1c1c1c] bg-[#2a2a2a]"
            />
            <Svg box="0 0 12 10" className="pointer-events-none -ml-[14px] mr-[2px] hidden h-[10px] w-3 text-white peer-checked:block">
              <path d="M1 5l3.5 3.5L11 1" strokeWidth="2" />
            </Svg>
            <input aria-label="Name" defaultValue="GameObject" className={clsx(field, 'ml-2 h-[23px] flex-1 px-[3px] font-semibold')} />
            <input id="static" type="checkbox" className="ml-1 size-[17px] shrink-0 appearance-none rounded-[3px] border border-[#1c1c1c] bg-[#2a2a2a]" />
            <label htmlFor="static" className="ml-[6px] text-[#b0b0b0]">Static</label>
            <Caret className="ml-1 mr-[3px] h-[6px] w-[10px]" />
          </div>
          <div className="flex items-center">
            <label htmlFor="tag" className="w-[34px] text-[#b0b0b0]">Tag</label>
            <InspectorSelect id="tag" value="Untagged" className="w-[125px]" />
            <label htmlFor="layer" className="ml-[16px] w-[47px] text-[#b0b0b0]">Layer</label>
            <InspectorSelect id="layer" value="Default" className="flex-1" />
          </div>
        </div>
      </div>
      <div className="flex h-[27px] shrink-0 items-center border-b border-[#303030] bg-[#3e3e3e] pl-2 pr-[14px] pt-px">
        <FoldOpen />
        <AxesIcon className="ml-[9px] size-4" />
        <span className="ml-[32px] font-semibold">Transform</span>
        <div className="ml-auto flex items-center">
          <HelpIcon className="mr-3 size-[14px]" />
          <PresetIcon className="mr-4 size-[13px]" />
          <Dots />
        </div>
      </div>
      <div className="flex flex-col gap-[2px] border-b border-[#1f1f1f] pt-1 pb-[11px] pl-[24px] pr-[5px]">
        {transformRows.map(({ label, value }) => (
          <div key={label} className="flex h-[23px] items-center text-[#b8b8b8]">
            <span className="flex-1">{label}</span>
            {['X', 'Y', 'Z'].map((axis) => (
              <label key={axis} className="flex w-[80px] items-center justify-end gap-1">
                {axis}
                <input defaultValue={value} className={clsx(field, 'h-[23px] w-[60px] px-[3px] text-[#d8d8d8]')} />
              </label>
            ))}
          </div>
        ))}
      </div>
      <button type="button" className="mx-auto mt-[11px] h-[29px] w-[286px] rounded-[3px] border border-[#303030] bg-[#585858] text-[#e0e0e0]">
        Add Component
      </button>
    </section>
  );
}

export default function App() {
  return (
    <div className="flex h-screen flex-col bg-black pt-[52px] pb-[53px] font-[Inter,'Liberation_Sans',sans-serif] text-[15px] leading-5 text-[#cfcfcf] [font-feature-settings:'calt'_0]">
      <MenuBar />
      <MainToolbar />
      <main className="grid min-h-0 flex-1 grid-cols-[minmax(0,1041fr)_minmax(0,484fr)_minmax(0,391fr)] gap-[2px] bg-[#191919]">
        <div className="grid min-h-0 min-w-0 grid-rows-[minmax(0,396fr)_minmax(0,514fr)] gap-[2px]">
          <ScenePanel />
          <GamePanel />
        </div>
        <div className="grid min-h-0 min-w-0 grid-rows-[minmax(0,433fr)_minmax(0,477fr)] gap-[2px]">
          <HierarchyPanel />
          <ProjectPanel />
        </div>
        <InspectorPanel />
      </main>
    </div>
  );
}
